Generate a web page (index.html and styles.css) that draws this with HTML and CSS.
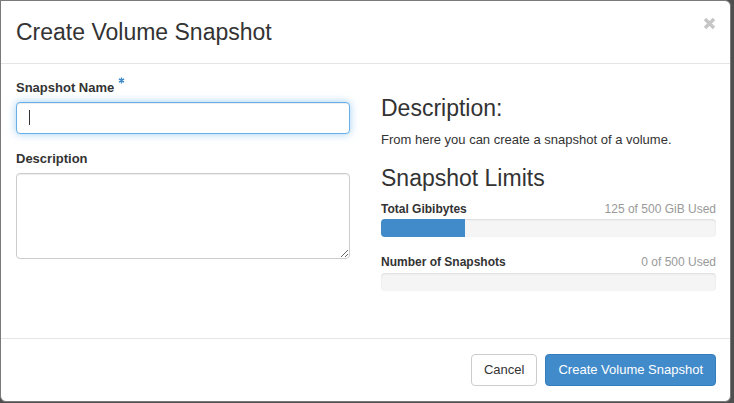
FILE: index.html
```html
<!DOCTYPE html>
<html lang="en">
<head>
<meta charset="utf-8">
<title>Create Volume Snapshot</title>
<link rel="stylesheet" href="styles.css">
</head>
<body>
<div class="modal">
  <div class="modal-header">
    <h4 class="modal-title">Create Volume Snapshot</h4>
    <button class="close" type="button" aria-label="Close">
      <svg width="13" height="13" viewBox="0 0 13 13"><path d="M2 2 L11 11 M11 2 L2 11" stroke="#c6c6c6" stroke-width="3.4" stroke-linecap="butt"/></svg>
    </button>
  </div>
  <div class="modal-body">
    <div class="col-left">
      <div class="form-group first">
        <label class="control-label" for="name">Snapshot Name<span class="required"><svg width="7" height="7" viewBox="0 0 8 8"><path d="M4 0.5 V7.5 M1 2.2 L7 5.8 M7 2.2 L1 5.8" stroke="#428bca" stroke-width="1.6"/></svg></span></label>
        <div class="input-wrap">
          <input id="name" class="form-control focused" type="text">
          <span class="caret"></span>
        </div>
      </div>
      <div class="form-group">
        <label class="control-label" for="desc">Description</label>
        <textarea id="desc" class="form-control textarea"></textarea>
      </div>
    </div>
    <div class="col-right">
      <h3 class="heading first">Description:</h3>
      <p class="help">From here you can create a snapshot of a volume.</p>
      <h3 class="heading">Snapshot Limits</h3>
      <div class="quota">
        <div class="quota-row"><strong>Total Gibibytes</strong><span class="used">125 of 500 GiB Used</span></div>
        <div class="progress"><div class="progress-bar" style="width:25%"></div></div>
      </div>
      <div class="quota second">
        <div class="quota-row"><strong>Number of Snapshots</strong><span class="used">0 of 500 Used</span></div>
        <div class="progress"><div class="progress-bar" style="width:0%"></div></div>
      </div>
    </div>
  </div>
  <div class="modal-footer">
    <button class="btn btn-default" type="button">Cancel</button>
    <button class="btn btn-primary" type="button">Create Volume Snapshot</button>
  </div>
</div>
</body>
</html>
```

FILE: styles.css
```css
html, body {
  margin: 0;
  padding: 0;
}
body {
  background: #4f4f4f;
  font-family: "Liberation Sans", Arial, sans-serif;
  font-size: 13px;
  line-height: 1.42857;
  color: #333;
  width: 734px;
  height: 403px;
  overflow: hidden;
}
.modal {
  box-sizing: border-box;
  width: 731px;
  height: 402px;
  background: #fff;
  border: 1px solid #7a7a7a;
  border-radius: 0 6px 6px 6px;
  display: flex;
  flex-direction: column;
}
.modal-header {
  display: flex;
  justify-content: space-between;
  align-items: flex-start;
  padding: 15px 14px 15px 15px;
  border-bottom: 1px solid #e5e5e5;
}
.modal-title {
  margin: 0;
  font-size: 23px;
  font-weight: normal;
  line-height: 32px;
  color: #333;
}
.close {
  margin-top: 1px;
  padding: 0;
  border: 0;
  background: none;
  width: 13px;
  height: 13px;
  display: block;
}
.close svg { display: block; }
.modal-body {
  box-sizing: border-box;
  height: 274px;
  padding: 15px 14px 15px 15px;
  display: grid;
  grid-template-columns: 334px 335px;
  column-gap: 31px;
}
.form-group {
  margin-bottom: 15px;
}
.form-group.first {
  margin-bottom: 16px;
}
.control-label {
  display: inline-block;
  font-weight: bold;
  line-height: 18px;
  margin-bottom: 5px;
}
.required {
  display: inline-block;
  margin-left: 4px;
  vertical-align: top;
  margin-top: -2px;
}
.required svg { display: block; }
.input-wrap {
  position: relative;
}
.form-control {
  box-sizing: border-box;
  display: block;
  width: 100%;
  margin: 0;
  padding: 6px 12px;
  font-family: inherit;
  font-size: 13px;
  color: #555;
  background: #fff;
  border: 1px solid #ccc;
  border-radius: 4px;
  box-shadow: inset 0 1px 1px rgba(0,0,0,.075);
  outline: none;
}
.focused {
  height: 32px;
  border-color: #66afe9;
  box-shadow: inset 0 1px 1px rgba(0,0,0,.075), 0 0 8px rgba(102,175,233,.6);
}
.caret {
  position: absolute;
  left: 13px;
  top: 8px;
  width: 1px;
  height: 15px;
  background: #333;
}
.textarea {
  height: 86px;
  resize: vertical;
}
.heading {
  margin: 0 0 10px;
  font-size: 23px;
  font-weight: normal;
  line-height: 25px;
  color: #333;
}
.heading.first {
  margin-top: 17px;
}
.help {
  margin: 0 0 16px;
}
.quota-row {
  display: flex;
  justify-content: space-between;
  font-size: 12px;
  line-height: 17px;
}
.quota-row strong { color: #333; }
.used { color: #999; }
.quota.second { margin-top: 17px; }
.progress {
  margin-top: 1px;
  height: 18px;
  background: #f5f5f5;
  border-radius: 4px;
  box-shadow: inset 0 1px 2px rgba(0,0,0,.1);
  overflow: hidden;
}
.quota.second .progress { margin-top: 2px; }
.progress-bar {
  height: 100%;
  background: #428bca;
}
.modal-footer {
  flex: 1;
  display: flex;
  justify-content: flex-end;
  align-items: flex-start;
  gap: 8px;
  padding: 15px 14px 15px 15px;
  border-top: 1px solid #e5e5e5;
}
.btn {
  font-family: inherit;
  font-size: 13px;
  line-height: 18px;
  padding: 6px 12px;
  border: 1px solid transparent;
  border-radius: 4px;
  cursor: pointer;
}
.btn-default {
  color: #333;
  background: #fff;
  border-color: #ccc;
}
.btn-primary {
  color: #fff;
  background: #428bca;
  border-color: #357ebd;
}
```
